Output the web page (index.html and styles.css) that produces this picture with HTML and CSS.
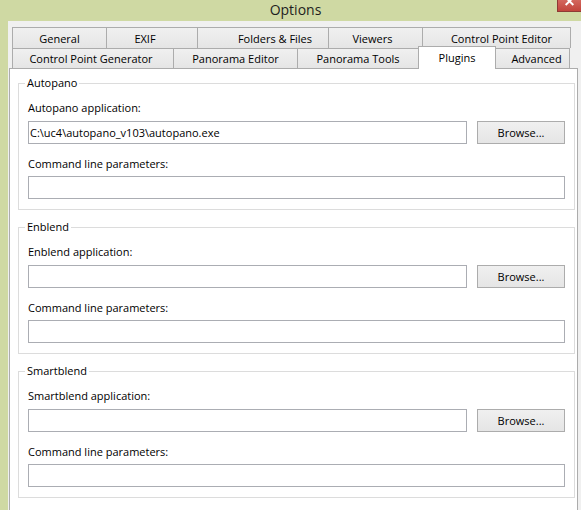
FILE: index.html
```html
<!DOCTYPE html>
<html lang="en">
<head>
<meta charset="UTF-8">
<meta name="viewport" content="width=device-width, initial-scale=1.0">
<title>Options</title>
<link rel="stylesheet" href="styles.css">
</head>
<body>

<div class="window">
  <div class="titlebar">
    <span class="title">Options</span>
    <button class="close" aria-label="Close">
      <svg width="24" height="12" viewBox="0 0 24 12">
        <path d="M8 -3 L16 5 M16 -3 L8 5" stroke="#fff" stroke-width="2"/>
      </svg>
    </button>
  </div>

  <div class="frame">
    <div class="frame-edge"></div>
    <div class="client">

      <div class="tabs">
        <div class="tab-row">
          <div class="tab tab-general">General</div>
          <div class="tab tab-exif">EXIF</div>
          <div class="tab tab-folders">Folders &amp; Files</div>
          <div class="tab tab-viewers">Viewers</div>
          <div class="tab tab-cpe last">Control Point Editor</div>
        </div>
        <div class="tab-row">
          <div class="tab tab-cpg">Control Point Generator</div>
          <div class="tab tab-pe">Panorama Editor</div>
          <div class="tab tab-pt">Panorama Tools</div>
          <div class="tab tab-plugins active">Plugins</div>
          <div class="tab tab-advanced last">Advanced</div>
        </div>
      </div>

      <div class="panel">
        <fieldset class="group">
          <legend>Autopano</legend>
          <label class="field-label">Autopano application:</label>
          <div class="path-row">
            <input class="text" type="text" value="C:\uc4\autopano_v103\autopano.exe">
            <button class="browse">Browse...</button>
          </div>
          <label class="field-label second">Command line parameters:</label>
          <input class="text" type="text">
        </fieldset>

        <fieldset class="group">
          <legend>Enblend</legend>
          <label class="field-label">Enblend application:</label>
          <div class="path-row">
            <input class="text" type="text">
            <button class="browse">Browse...</button>
          </div>
          <label class="field-label second">Command line parameters:</label>
          <input class="text" type="text">
        </fieldset>

        <fieldset class="group">
          <legend>Smartblend</legend>
          <label class="field-label">Smartblend application:</label>
          <div class="path-row">
            <input class="text" type="text">
            <button class="browse">Browse...</button>
          </div>
          <label class="field-label second">Command line parameters:</label>
          <input class="text" type="text">
        </fieldset>
      </div>

    </div>
  </div>
</div>

</body>
</html>
```

FILE: styles.css
```css
html, body {
  margin: 0;
  padding: 0;
  overflow: hidden;
}

body {
  font-family: "Open Sans", "Noto Sans", sans-serif;
  font-size: 11px;
  color: #000;
  background: #cfd9a3;
}

.window {
  width: 581px;
  height: 510px;
  display: flex;
  flex-direction: column;
}

/* title bar */
.titlebar {
  height: 21px;
  flex: none;
  display: grid;
  grid-template-columns: 1fr auto 1fr;
  padding-left: 10px;
  background: #cfd9a3;
}

.title {
  grid-column: 2;
  font-size: 14px;
  line-height: 19px;
  color: #1e1e1e;
}

.close {
  grid-column: 3;
  justify-self: end;
  align-self: start;
  width: 24px;
  height: 12px;
  padding: 0;
  border: 1px solid #8e3a34;
  border-top: none;
  border-right: none;
  background: linear-gradient(#d3675d, #c2453c);
  display: flex;
}

.frame {
  flex: 1;
  display: flex;
}

.frame-edge {
  width: 8px;
  background: #cfd9a3;
}

.client {
  flex: 1;
  background: #f0f0f0;
  padding: 6px 3px 0 1px;
  display: flex;
  flex-direction: column;
}

/* tabs */
.tabs {
  margin-left: 3px;
  width: 559px;
}

.tab-row {
  display: flex;
}

.tab-row:first-child {
  height: 21px;
}

.tab-row:last-child {
  height: 20px;
}

.tab {
  box-sizing: border-box;
  border-top: 1px solid #acacac;
  border-left: 1px solid #acacac;
  background: linear-gradient(#f0f0f0, #e5e5e5);
  display: flex;
  align-items: center;
  justify-content: center;
  white-space: nowrap;
}

.tab.last {
  border-right: 1px solid #acacac;
}

.tab-general { width: 94px; }
.tab-exif { width: 91px; padding-right: 14px; }
.tab-folders { width: 131px; padding-left: 24px; }
.tab-viewers { width: 94px; padding-right: 6px; }
.tab-cpe { width: 149px; padding-left: 10px; }

.tab-cpg { width: 161px; padding-right: 4px; }
.tab-pe { width: 124px; }
.tab-pt { width: 121px; }
.tab-plugins { width: 78px; }
.tab-advanced { width: 75px; padding-left: 8px; }

.tab.active {
  height: 23px;
  margin-top: -2px;
  margin-right: -1px;
  padding-bottom: 2px;
  border-right: 1px solid #acacac;
  background: #fff;
  position: relative;
  z-index: 1;
}

/* panel */
.panel {
  flex: 1;
  width: 569px;
  box-sizing: border-box;
  background: #fff;
  border: 1px solid #acacac;
  border-bottom: none;
  padding: 6px 2px 0 8px;
  display: flex;
  flex-direction: column;
  gap: 9px;
}

.group {
  margin: 0;
  border: 1px solid #dcdcdc;
  padding: 9px 9px 10px 9px;
  display: flex;
  flex-direction: column;
}

.group legend {
  padding: 0 2px;
  margin-left: -3px;
  line-height: 16px;
}

.field-label {
  line-height: 16px;
  margin-bottom: 5px;
}

.field-label.second {
  margin-top: 12px;
  margin-bottom: 4px;
}

.path-row {
  display: flex;
  gap: 10px;
}

.text {
  height: 23px;
  box-sizing: border-box;
  margin: 0;
  border: 1px solid #abadb3;
  padding: 0 1px;
  font: inherit;
  color: #000;
  background: #fff;
  outline: none;
}

.path-row .text {
  flex: 1;
  min-width: 0;
}

.browse {
  width: 88px;
  height: 23px;
  box-sizing: border-box;
  margin: 0;
  border: 1px solid #acacac;
  background: linear-gradient(#f0f0f0, #e5e5e5);
  font: inherit;
  color: #000;
  padding: 0;
}
```
